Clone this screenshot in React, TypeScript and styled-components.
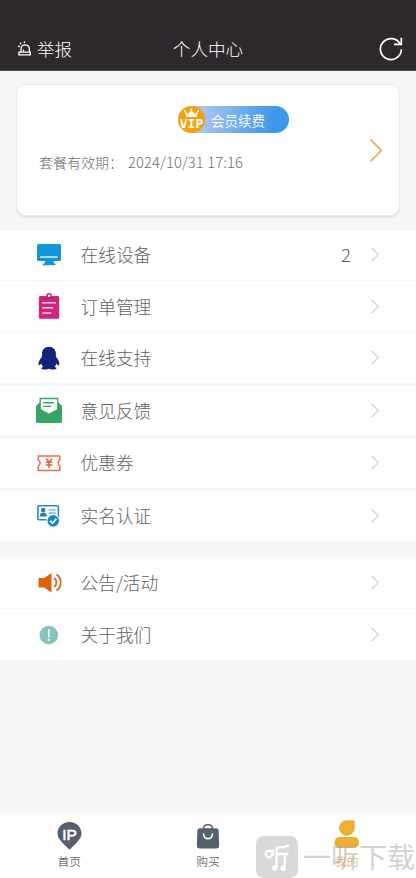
import React from 'react';
import styled, { createGlobalStyle } from 'styled-components';

const GlobalStyle = createGlobalStyle`
  * { box-sizing: border-box; }
  body {
    margin: 0;
    background: #f6f6f6;
    font-family: "Noto Sans CJK SC", "Noto Sans", sans-serif;
    font-weight: 300;
  }
  svg { display: block; flex: none; }
`;

const Screen = styled.div`
  position: relative;
  display: flex;
  flex-direction: column;
  width: 416px;
  height: 878px;
  overflow: hidden;
  background: #f6f6f6;
`;

const Header = styled.header`
  display: grid;
  grid-template-columns: 1fr auto 1fr;
  align-items: center;
  height: 71px;
  padding: 27px 13px 0 17px;
  background: #2d282b;
  border-bottom: 1px solid #4d494b;
  color: #fff;
  flex: none;
`;

const ReportButton = styled.div`
  display: flex;
  align-items: center;
  gap: 4px;
  font-size: 17.5px;
  line-height: 24px;
`;

const Title = styled.h1`
  margin: 0 4px 0 0;
  font-size: 17.6px;
  font-weight: 300;
  line-height: 24px;
`;

const RefreshButton = styled.div`
  justify-self: end;
`;

const Card = styled.section`
  display: flex;
  align-items: center;
  justify-content: space-between;
  height: 130px;
  margin: 14px 17px 15px;
  padding: 0 16px 0 22px;
  background: #fff;
  border-radius: 9px;
  box-shadow: 0 0 0 1px #ececec, 0 2px 0 1px #e5e5e5;
  flex: none;
`;

const CardBody = styled.div`
  display: flex;
  flex-direction: column;
  height: 100%;
  padding-top: 21px;
`;

const VipPill = styled.div`
  display: flex;
  align-items: center;
  gap: 6px;
  width: 111px;
  height: 27px;
  margin-left: 139px;
  border-radius: 14px;
  background: linear-gradient(100deg, #a9c5ef 22%, #3b97ec 85%);
  color: #fff;
  font-size: 13.5px;
  font-weight: 350;
`;

const Expiry = styled.div`
  display: flex;
  gap: 5px;
  margin-top: 18px;
  color: #6f6f6f;
  font-size: 14px;
  line-height: 22px;
  white-space: nowrap;
`;

const DateText = styled.span`
  font-size: 14.8px;
  letter-spacing: 0.08px;
`;

const Row = styled.div<{ $height: number; $gap: number }>`
  display: flex;
  align-items: center;
  height: ${p => p.$height}px;
  margin-bottom: ${p => p.$gap}px;
  padding: 0 36px 0 34px;
  background: #fff;
  color: #626262;
  font-size: 17.7px;
  line-height: 26px;
  flex: none;
`;

const RowLabel = styled.span`
  flex: 1;
  margin-left: 16.5px;
  padding-bottom: 2px;
`;

const RowValue = styled.span`
  margin-right: 19px;
  padding-bottom: 2px;
  font-size: 18.5px;
`;

const TabBar = styled.nav`
  display: grid;
  grid-template-columns: repeat(3, 1fr);
  height: 65px;
  margin-top: auto;
  background: #fff;
  flex: none;
`;

const Tab = styled.div<{ $active?: boolean }>`
  display: flex;
  flex-direction: column;
  align-items: center;
  padding-top: 6px;
  color: ${p => (p.$active ? '#dfa030' : '#333')};
  font-size: 11.8px;
  font-weight: 300;
  line-height: 18px;
  svg { margin-bottom: 1px; }
`;

const Watermark = styled.div`
  position: absolute;
  left: 256px;
  top: 836px;
  display: flex;
  align-items: center;
  gap: 5px;
  color: rgba(165, 165, 165, 0.5);
  font-size: 28px;
  font-weight: 400;
  line-height: 42px;
  white-space: nowrap;
`;

const WatermarkText = styled.span`
  margin-top: -2px;
`;

const Chevron = ({ large = false }: { large?: boolean }) =>
  large ? (
    <svg width="14" height="24" viewBox="0 0 14 24" fill="none" stroke="#eab458" strokeWidth="1.8">
      <path d="M1.5 1.5 12.3 12.500 1.5 23.300" />
    </svg>
  ) : (
    <svg width="10" height="16" viewBox="0 0 10 16" fill="none" stroke="#d2d2d2" strokeWidth="1.2">
      <path d="M1.5 1 8.300 7.600 1.5 14.200" />
    </svg>
  );

const SirenIcon = () => (
  <svg width="16" height="17" viewBox="0 0 16 17" fill="none" stroke="#fff" strokeWidth="1.3">
    <path d="M1.5 14.900h12.300M4 12V9a4.200 4.200 0 0 1 8.400 0v3M6.500 11.800V9.500M7.400 3.100V1.300M4.200 4.300 3 2.600M2.800 7 1 5.800" />
    <path d="M2 15v-2.800h11.300V15" />
  </svg>
);

const RefreshIcon = () => (
  <svg width="24" height="25" viewBox="0 0 24 25" fill="none" stroke="#fff" strokeWidth="1.7">
    <path d="M21.4 8.600A10.5 10.5 0 1 0 22.4 13.300M22.3 1.700V8.400H15" />
  </svg>
);

const VipIcon = () => (
  <svg width="27" height="27" viewBox="0 0 28 28">
    <circle cx="14" cy="14" r="14" fill="#f6a00e" />
    <path d="M7.200 5.700 10.800 8.100 13.800 3.800 17 8.100 20.600 5.700 19.200 11.500H8.700Z" fill="#fff" />
    <circle cx="7" cy="5.500" r="1" fill="#fff" />
    <circle cx="13.800" cy="3.600" r="1.100" fill="#fff" />
    <circle cx="20.800" cy="5.500" r="1" fill="#fff" />
    <text x="14" y="23" textAnchor="middle" fill="#fff" fontFamily="DejaVu Sans Mono, monospace" fontWeight="700" fontSize="13.500">VIP</text>
  </svg>
);

const RowSvg = ({ children }: { children: React.ReactNode }) => (
  <svg width="30" height="30" viewBox="0 0 30 30" fill="none">{children}</svg>
);

const MonitorIcon = () => (
  <RowSvg>
    <path fill="#1296db" d="M4.500 4h21A1.500 1.500 0 0 1 27 5.500v14a1.500 1.500 0 0 1-1.500 1.500H19.500c0 1.800.7 2.700 2 3.200v1H8.700v-1c1.500-.5 2.300-1.400 2.300-3.200H4.500A1.500 1.500 0 0 1 3 19.500v-14A1.500 1.500 0 0 1 4.500 4Z" />
    <path d="M6 17h17.500" stroke="#fff" strokeWidth="1.300" />
  </RowSvg>
);

const ClipboardIcon = () => (
  <RowSvg>
    <rect x="4.900" y="4" width="20.300" height="22.700" rx="1.500" fill="#d4237a" />
    <circle cx="15" cy="3.800" r="2" fill="#fff" stroke="#d4237a" strokeWidth="1.500" />
    <path d="M10 6.500h10" stroke="#b91869" strokeWidth="1" />
    <path d="M8.300 10.700H22M8.300 15.700h11M8.300 20.900h9" stroke="#ffd6ea" strokeWidth="1.500" />
  </RowSvg>
);

const PenguinIcon = () => (
  <RowSvg>
    <path fill="#13227a" d="M15 3.700c-4.300 0-7 3-7 7v2.800c-1.600 2.200-3.500 5.200-3.500 7.300 0 1.700.7 1.900 1.800.8l.9-1c.4 1.500 1.100 2.600 2 3.500-1.200.3-1.800.8-1.800 1.400 0 1.400 6 1.300 7.400.2 1.400 1.100 7.600 1.200 7.600-.2 0-.7-.7-1.200-1.900-1.500.9-.9 1.600-2 2-3.400l1 1.100c1.200 1.100 1.900.7 1.900-.9 0-2.200-1.800-5.100-3.500-7.300v-2.800c0-4-2.700-7-6.900-7Z" />
  </RowSvg>
);

const EnvelopeIcon = () => (
  <RowSvg>
    <path d="M2 10 6 6.300v7l9 5 9-5v-7l4 3.700v15.600a1.400 1.400 0 0 1-1.400 1.400H3.400A1.400 1.400 0 0 1 2 25.600Z" fill="#34a65f" />
    <path d="M6.200 13.500V2.500h17.600v11L15 18.300Z" fill="#fff" stroke="#34a65f" strokeWidth="1.300" />
    <path d="M9.300 6.700h10.500M9.300 10.400h8" stroke="#34a65f" strokeWidth="1.400" />
  </RowSvg>
);

const CouponIcon = () => (
  <RowSvg>
    <path d="M4.300 8h21.500v4.100c-2.200.8-2.200 5.200 0 6.100v4.200H4.300v-4.200c2.400-.9 2.400-5.300 0-6.100Z" stroke="#e86f4a" strokeWidth="1.500" strokeLinejoin="round" />
    <path d="m12 10.500 3.100 3.500 3.100-3.500M15.100 14v6M11.700 14.200h6.800M11.700 17h6.800" stroke="#e86038" strokeWidth="1.500" />
  </RowSvg>
);

const IdentityIcon = () => (
  <RowSvg>
    <rect x="3.900" y="4.800" width="20.500" height="14" rx="1" stroke="#2789ca" strokeWidth="1.600" />
    <circle cx="9.200" cy="9" r="2.200" fill="#147fc2" />
    <path d="M5.700 15.500c0-5.400 7.200-5.400 7.200 0Z" fill="#147fc2" />
    <path d="M14.700 9h7M14.700 12.200h7" stroke="#4d9dce" strokeWidth="1.200" />
    <circle cx="19.200" cy="19.800" r="6.400" fill="#1788cb" stroke="#fff" strokeWidth="1.100" />
    <path d="m16 19.700 2.400 2.400 4-4.200" stroke="#fff" strokeWidth="1.600" />
  </RowSvg>
);

const SpeakerIcon = () => (
  <RowSvg>
    <path d="M5.200 10h5l7.300-5.100v19.500L10.200 19.500h-5a.7.7 0 0 1-.7-.7v-8.100a.7.7 0 0 1 .7-.7Z" fill="#d8660f" />
    <path d="M20 10.200c3.200 1.600 3.200 7.200 0 8.800M22.400 6.600c5.700 3.400 5.700 12.600 0 16" stroke="#d8660f" strokeWidth="1.700" />
  </RowSvg>
);

const AboutIcon = () => (
  <RowSvg>
    <circle cx="14.800" cy="15" r="9.300" fill="#87c5c2" />
    <path d="M14.800 9.300v8.200M14.800 18.800v1.900" stroke="#fff" strokeWidth="1.700" />
  </RowSvg>
);

const HomeIcon = () => (
  <svg width="28" height="32" viewBox="0 0 28 32">
    <path d="M14.500 3C7.600 3 2.500 8.100 2.500 14.600c0 5.500 5.700 9.800 10.600 15q1.400 1.600 2.800 0C20.800 24.400 26.500 20.100 26.500 14.600 26.500 8.100 21.400 3 14.500 3Z" fill="#56606d" />
    <text x="14.600" y="20.600" textAnchor="middle" fontFamily="Liberation Sans, sans-serif" fontWeight="400" fontSize="15.500" fill="#fff" stroke="#fff" strokeWidth=".55">IP</text>
  </svg>
);

const BagIcon = () => (
  <svg width="28" height="32" viewBox="0 0 28 32" fill="none">
    <path d="M9.500 12V9.600c0-5.100 9-5.100 9 0V12" stroke="#56606d" strokeWidth="1.600" />
    <path d="M6.300 9.200h15.400a3 3 0 0 1 3 2.800l.4 14.300a3 3 0 0 1-3 3.200H5.900a3 3 0 0 1-3-3.200L3.300 12a3 3 0 0 1 3-2.800Z" fill="#56606d" />
    <path d="M9.600 15.200c0 5.900 8.800 5.900 8.800 0" stroke="#fff" strokeWidth="1.700" strokeLinecap="round" />
  </svg>
);

const UserIcon = () => (
  <svg width="28" height="32" viewBox="0 0 28 32" fill="#eeae35">
    <path d="M13.800 1.200h6.800a1 1 0 0 1 1 1v6.800a7.800 7.800 0 1 1-7.800-7.800Z" />
    <rect x="1.500" y="18" width="24.500" height="11" rx="4.800" />
  </svg>
);

const WatermarkLogo = () => (
  <svg width="42" height="42" viewBox="0 0 42 42" fill="none">
    <rect width="42" height="42" rx="8" fill="#d9d9d9" />
    <g stroke="#fff" strokeWidth="2.300" strokeLinecap="round" strokeLinejoin="round">
      <circle cx="13" cy="18" r="3.300" />
      <path d="M16.800 14.500V19M32 9.500c-3 1.700-6 2.100-11.500 2.100v20M20.500 18h11M28.800 18v14" />
      <circle cx="18.800" cy="32" r="1.500" fill="#fff" />
      <circle cx="27.100" cy="32.200" r="1.500" fill="#fff" />
    </g>
  </svg>
);

const rows = [
  { label: '在线设备', Icon: MonitorIcon, height: 50, gap: 1, value: '2' },
  { label: '订单管理', Icon: ClipboardIcon, height: 51, gap: 1 },
  { label: '在线支持', Icon: PenguinIcon, height: 50, gap: 3 },
  { label: '意见反馈', Icon: EnvelopeIcon, height: 49, gap: 3 },
  { label: '优惠券', Icon: CouponIcon, height: 50, gap: 3 },
  { label: '实名认证', Icon: IdentityIcon, height: 50, gap: 16 },
  { label: '公告/活动', Icon: SpeakerIcon, height: 51, gap: 1 },
  { label: '关于我们', Icon: AboutIcon, height: 51, gap: 0 },
];

export default function App() {
  return (
    <Screen>
      <GlobalStyle />
      <Header>
        <ReportButton><SirenIcon />举报</ReportButton>
        <Title>个人中心</Title>
        <RefreshButton><RefreshIcon /></RefreshButton>
      </Header>
      <Card>
        <CardBody>
          <VipPill><VipIcon />会员续费</VipPill>
          <Expiry>
            <span>套餐有效期：</span>
            <DateText>2024/10/31 17:16</DateText>
          </Expiry>
        </CardBody>
        <Chevron large />
      </Card>
      {rows.map(({ label, Icon, height, gap, value }) => (
        <Row key={label} $height={height} $gap={gap}>
          <Icon />
          <RowLabel>{label}</RowLabel>
          {value && <RowValue>{value}</RowValue>}
          <Chevron />
        </Row>
      ))}
      <TabBar>
        <Tab><HomeIcon />首页</Tab>
        <Tab><BagIcon />购买</Tab>
        <Tab $active><UserIcon />我的</Tab>
      </TabBar>
      <Watermark><WatermarkLogo /><WatermarkText>一听下载</WatermarkText></Watermark>
    </Screen>
  );
}
